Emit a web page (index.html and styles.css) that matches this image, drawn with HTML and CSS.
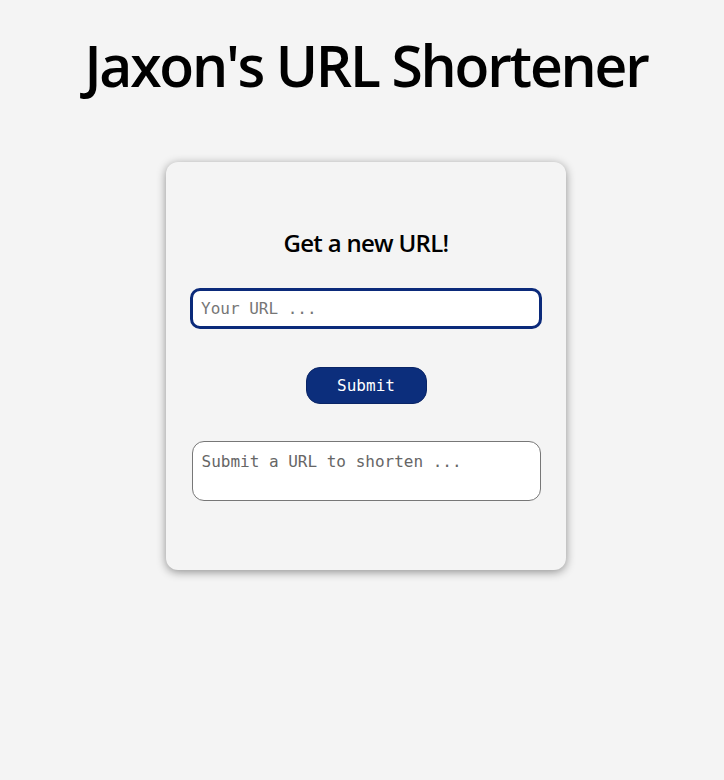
FILE: index.html
```html
<!DOCTYPE html>
<html>
<head>
<meta charset="utf-8">
<link rel="stylesheet" href="styles.css">
</head>
<body>
<h1 class="title">Jaxon's URL Shortener</h1>
<main class="card">
  <h2 class="card-title">Get a new URL!</h2>
  <input class="url-input" type="text" placeholder="Your URL ...">
  <button class="submit-btn">Submit</button>
  <div class="result">Submit a URL to shorten ...</div>
</main>
</body>
</html>
```

FILE: styles.css
```css
html, body {
  margin: 0;
  padding: 0;
  background: #f4f4f4;
}
body {
  font-family: "Open Sans", "Noto Sans", sans-serif;
  color: #000;
  display: flex;
  flex-direction: column;
  align-items: center;
  padding: 0 0 40px 8px;
}
.title {
  font-family: "Open Sans", sans-serif;
  font-weight: 600;
  font-size: 57px;
  letter-spacing: -2.2px;
  line-height: 72px;
  margin: 29px 0 0 0;
  text-align: center;
}
.card {
  box-sizing: border-box;
  width: 400px;
  height: 408px;
  margin-top: 61px;
  background: #f4f4f4;
  border-radius: 12px;
  box-shadow: 0 2px 10px rgba(0,0,0,0.42);
  display: flex;
  flex-direction: column;
  align-items: center;
  padding: 65px 24px 0 24px;
}
.card-title {
  font-family: "Open Sans", sans-serif;
  font-weight: 600;
  font-size: 24px;
  letter-spacing: -0.7px;
  line-height: 32px;
  margin: 0;
}
.url-input {
  box-sizing: border-box;
  width: 352px;
  height: 41px;
  margin-top: 29px;
  border: 3px solid #0b2a7a;
  border-radius: 10px;
  background: #fff;
  padding: 0 8px;
  font-family: "DejaVu Sans Mono", "Liberation Mono", monospace;
  font-size: 16px;
  color: #333;
  outline: none;
}
.url-input::placeholder {
  color: #767676;
}
.submit-btn {
  box-sizing: border-box;
  width: 121px;
  height: 37px;
  margin-top: 38px;
  background: #0c2e7c;
  border: 1px solid #0a2566;
  border-radius: 14px;
  color: #fff;
  font-family: "DejaVu Sans Mono", "Liberation Mono", monospace;
  font-size: 16px;
}
.result {
  box-sizing: border-box;
  width: 349px;
  height: 60px;
  margin-top: 37px;
  border: 1px solid #777;
  border-radius: 12px;
  background: #fff;
  padding: 10px 9px;
  font-family: "DejaVu Sans Mono", "Liberation Mono", monospace;
  font-size: 16px;
  line-height: 20px;
  color: #666;
}
```
